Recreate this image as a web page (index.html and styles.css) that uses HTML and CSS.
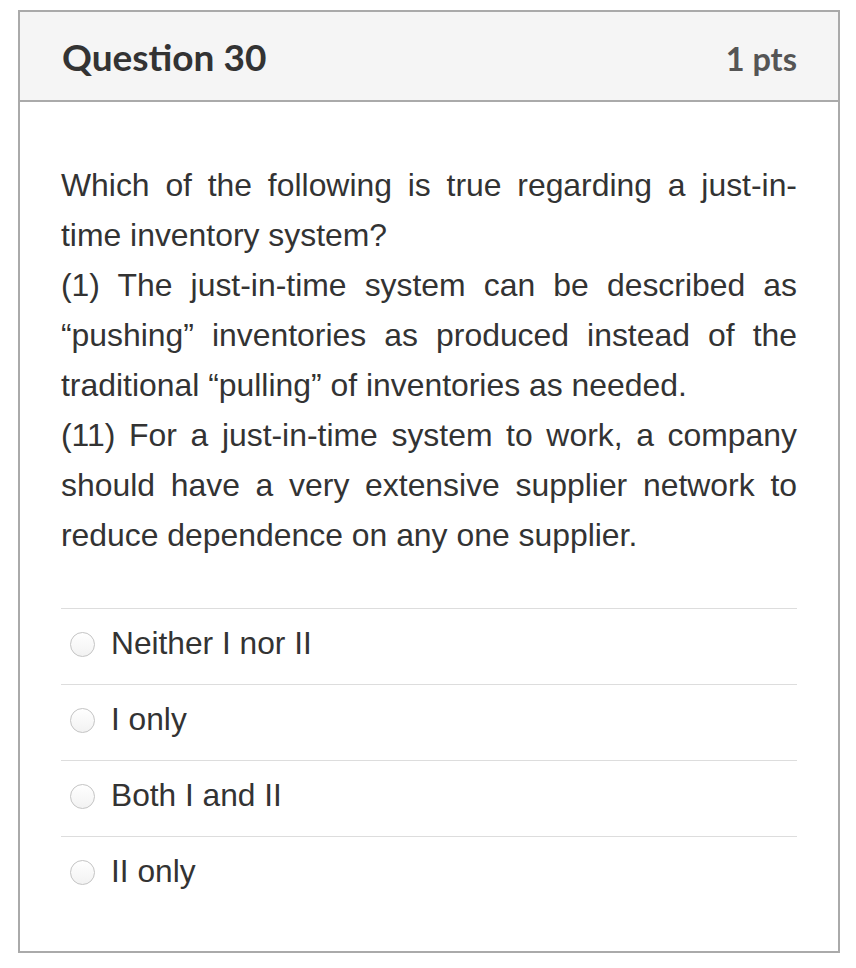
FILE: index.html
```html
<!DOCTYPE html>
<html>
<head>
<meta charset="utf-8">
<link rel="stylesheet" href="styles.css">
</head>
<body>
<div class="card">
  <div class="header">
    <span class="title">Question 30</span>
    <span class="pts">1 pts</span>
  </div>
  <div class="content">
    <div class="question">Which of the following is true regarding a just-in-time inventory system?<br>(1) The just-in-time system can be described as “pushing” inventories as produced instead of the traditional “pulling” of inventories as needed.<br>(11) For a just-in-time system to work, a company should have a very extensive supplier network to reduce dependence on any one supplier.</div>
    <div class="options">
      <div class="option"><span class="radio"></span><span class="label">Neither I nor II</span></div>
      <div class="option"><span class="radio"></span><span class="label">I only</span></div>
      <div class="option"><span class="radio"></span><span class="label">Both I and II</span></div>
      <div class="option"><span class="radio"></span><span class="label">II only</span></div>
    </div>
  </div>
</div>
</body>
</html>
```
FILE: styles.css
```css
html, body {
  margin: 0;
  padding: 0;
  background: #ffffff;
}
.card {
  box-sizing: border-box;
  width: 822px;
  margin: 10px 0 0 18px;
  border: 2px solid #aaaaaa;
  background: #ffffff;
}
.header {
  height: 88px;
  background: #f5f5f5;
  border-bottom: 2px solid #aaaaaa;
  display: flex;
  align-items: center;
  justify-content: space-between;
  padding: 0 41px 0 42px;
  font-family: Lato, "Open Sans", sans-serif;
  font-weight: 700;
}
.title {
  font-size: 37px;
  color: #333333;
}
.pts {
  font-size: 32.5px;
  color: #555555;
  margin-top: 4px;
}
.content {
  padding: 58px 41px 39px 41px;
  font-family: "Liberation Sans", Arial, sans-serif;
  color: #333333;
}
.question {
  font-size: 31.9px;
  line-height: 50px;
  text-align: justify;
}
.options {
  margin-top: 48px;
}
.option {
  box-sizing: border-box;
  height: 76px;
  border-top: 1px solid #dddddd;
  display: flex;
  align-items: center;
  padding-bottom: 6px;
  font-size: 31.7px;
}
.radio {
  box-sizing: border-box;
  width: 25px;
  height: 25px;
  border-radius: 50%;
  border: 1px solid #c4c4c4;
  background: linear-gradient(#ffffff, #f2f2f2);
  margin-left: 9px;
  margin-right: 16px;
  margin-top: 2px;
  flex: none;
}
```
